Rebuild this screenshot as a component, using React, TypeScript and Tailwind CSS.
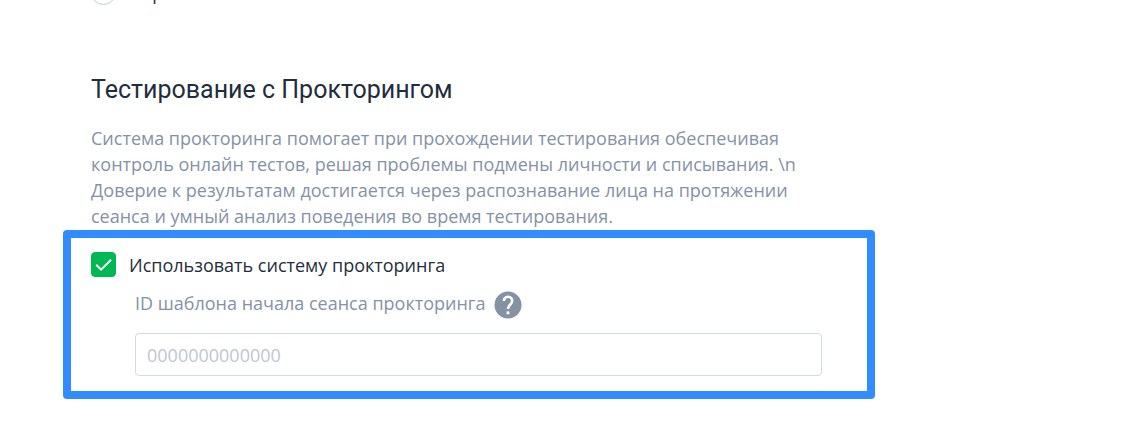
import React, { useState } from 'react'

const DESCRIPTION =
  'Система прокторинга помогает при прохождении тестирования обеспечивая контроль онлайн тестов, решая проблемы подмены личности и списывания. \\n Доверие к результатам достигается через распознавание лица на протяжении сеанса и умный анализ поведения во время тестирования.'

const HelpIcon = () => (
  <svg className="w-7 h-7" viewBox="0 0 28 28" fill="none">
    <circle cx="14" cy="14" r="13.5" fill="#8492a6" />
    <path
      d="M9.9 10C9.9 7.4 11.6 5.8 14 5.8s4.2 1.7 4.2 4.1c0 3.4-4.2 3.9-4.2 8.1"
      stroke="white"
      strokeWidth="2.6"
    />
    <path d="M12.6 20.4h2.8v2.8h-2.8z" fill="white" />
  </svg>
)

const ModeOption = () => (
  <label className="-mt-5 flex h-[25px] items-center gap-[13px] text-[#1f2d3d]">
    <input
      type="radio"
      name="mode"
      className="w-[25px] h-[25px] shrink-0 appearance-none rounded-full border border-[#c0ccda] bg-white checked:border-[#00b955]"
    />
    <span className="leading-[26px]">Первый</span>
  </label>
)

const ProctoringSettings = () => {
  const [enabled, setEnabled] = useState(true)
  const [templateId, setTemplateId] = useState('')

  return (
    <section className="rounded border-8 border-[#318cff] pl-5 pr-[45px] pt-3.5 pb-[15px]">
      <label className="flex items-start gap-[13px] text-[#1f2d3d]">
        <span className="relative w-[25px] h-[25px] shrink-0">
          <input
            type="checkbox"
            checked={enabled}
            onChange={(e) => setEnabled(e.target.checked)}
            className="block w-[25px] h-[25px] appearance-none rounded border border-[#c0ccda] checked:border-[#00b955] checked:bg-[#00b955]"
          />
          {enabled && (
            <svg className="pointer-events-none absolute inset-0 w-[25px] h-[25px]" viewBox="0 0 25 25" fill="none">
              <path d="M5.2 12.7l4.9 4.9L20 7.7" stroke="white" strokeWidth="2" />
            </svg>
          )}
        </span>
        <span className="leading-[26px]">Использовать систему прокторинга</span>
      </label>

      <div className="pl-11">
        <div className="mt-[13px] flex items-start gap-2">
          <label htmlFor="template-id" className="leading-6 text-[#8492a6]">
            ID шаблона начала сеанса прокторинга
          </label>
          <button type="button" aria-label="Подсказка">
            <HelpIcon />
          </button>
        </div>
        <input
          id="template-id"
          type="text"
          value={templateId}
          onChange={(e) => setTemplateId(e.target.value)}
          placeholder="0000000000000"
          className="mt-3.5 block h-[43px] w-full rounded border border-[#d3dce6] px-[11px] text-[#1f2d3d] placeholder:text-[#c0c6d0]"
        />
      </div>
    </section>
  )
}

const App = () => {
  return (
    <main className="overflow-hidden bg-white pl-[63px] pr-5 pb-11 font-['Open_Sans',sans-serif] text-[18px]">
      <div className="max-w-[812px]">
        <div className="pl-7 pr-[53px] pb-px">
          <ModeOption />
          <h2 className="mt-[69px] font-['Roboto',sans-serif] text-[25px] leading-8 text-[#1f2d3d]">
            Тестирование с Прокторингом
          </h2>
          <p className="mt-[19px] leading-[26px] text-[#8492a6]">{DESCRIPTION}</p>
        </div>
        <ProctoringSettings />
      </div>
    </main>
  )
}

export default App
